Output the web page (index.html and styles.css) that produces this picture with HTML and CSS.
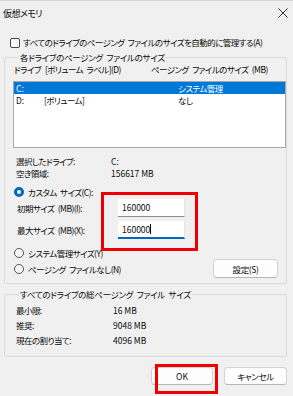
FILE: index.html
```html
<!DOCTYPE html>
<html>

<head>
  <title>仮想メモリ</title>
  <link rel="stylesheet" href="styles.css">
</head>

<body>
  <div class="titlebar">
    <span class="title">仮想メモリ</span>
    <svg class="close" width="10" height="10" viewBox="0 0 10 10">
      <path d="M0.5 0.5 L9.5 9.5 M9.5 0.5 L0.5 9.5" stroke="#333" stroke-width="1" fill="none" />
    </svg>
  </div>

  <div class="auto">
    <span class="checkbox"></span>
    <span>すべてのドライブのページング ファイルのサイズを自動的に管理する(A)</span>
  </div>

  <fieldset class="group">
    <legend>各ドライブのページング ファイルのサイズ</legend>
    <div class="list-head">
      <span>ドライブ</span>
      <span>[ボリューム ラベル](D)</span>
      <span>ページング ファイルのサイズ (MB)</span>
    </div>
    <div class="drive-list">
      <div class="drive-row selected">
        <span class="num">C:</span>
        <span></span>
        <span>システム管理</span>
      </div>
      <div class="drive-row">
        <span class="num">D:</span>
        <span>[ボリューム]</span>
        <span>なし</span>
      </div>
    </div>

    <div class="info">
      <span>選択したドライブ:</span>
      <span class="num">C:</span>
      <span>空き領域:</span>
      <span class="num">156617 MB</span>
    </div>

    <div class="radio-row custom">
      <span class="radio checked"></span>
      <span>カスタム サイズ(C):</span>
    </div>
    <div class="size-row first">
      <label>初期サイズ (MB)(I):</label>
      <div class="field num">160000</div>
    </div>
    <div class="size-row">
      <label>最大サイズ (MB)(X):</label>
      <div class="field focused num">160000<span class="caret"></span></div>
    </div>

    <div class="options">
      <div class="radios">
        <div class="radio-row">
          <span class="radio"></span>
          <span>システム管理サイズ(Y)</span>
        </div>
        <div class="radio-row">
          <span class="radio"></span>
          <span>ページング ファイルなし(N)</span>
        </div>
      </div>
      <button class="btn set">設定(S)</button>
    </div>
  </fieldset>

  <fieldset class="group total">
    <legend>すべてのドライブの総ページング ファイル サイズ</legend>
    <div class="totals">
      <span>最小限:</span>
      <span class="num">16 MB</span>
      <span>推奨:</span>
      <span class="num">9048 MB</span>
      <span>現在の割り当て:</span>
      <span class="num">4096 MB</span>
    </div>
  </fieldset>

  <div class="actions">
    <button class="btn num">OK</button>
    <button class="btn">キャンセル</button>
  </div>

  <div class="mark mark-size"></div>
  <div class="mark mark-ok"></div>
</body>

</html>
```

FILE: styles.css
```css
* {
  box-sizing: border-box;
}

body {
  margin: 0;
  width: 293px;
  height: 396px;
  overflow: hidden;
  position: relative;
  background-color: #f0f0f0;
  color: #0a0a0a;
  font-family: "Noto Sans CJK JP", sans-serif;
  font-size: 8.5px;
  line-height: 11px;
  letter-spacing: -0.55px;
  word-spacing: 2px;
  white-space: nowrap;
  font-feature-settings: "palt";
}

.num {
  letter-spacing: 0;
  word-spacing: 0;
}

.titlebar {
  height: 25px;
  display: flex;
  justify-content: space-between;
  align-items: center;
  padding: 0 5px 0 3px;
  border-top: 1px solid #d6d6d6;
}

.title {
  font-size: 9px;
}

.auto {
  display: flex;
  align-items: center;
  gap: 3px;
  height: 11px;
  margin-top: 12px;
  padding-left: 10px;
}

.checkbox {
  width: 10px;
  height: 10px;
  border: 1px solid #444;
  border-radius: 2px;
  background-color: #fbfbfb;
}

.group {
  margin: 4px 6px 0 4px;
  padding: 0 0 0 8px;
  border: 1px solid #dadada;
  border-radius: 2px;
  min-width: 0;
}

.group legend {
  padding: 0 1px;
  margin-left: 6px;
  line-height: 11px;
  letter-spacing: -0.3px;
}

.list-head {
  display: grid;
  grid-template-columns: 31px 106px 1fr;
  height: 13px;
  line-height: 13px;
  padding-left: 1px;
}

.drive-list {
  margin-top: 5px;
  height: 67px;
  background-color: #ffffff;
  border: 1px solid #a9a9a9;
  padding: 0;
}

.drive-row {
  display: grid;
  grid-template-columns: 28px 134px 1fr;
  height: 13px;
  line-height: 13px;
  padding-left: 2px;
}

.drive-row.selected {
  background-color: #0078d7;
  color: #ffffff;
  height: 12px;
  line-height: 12px;
}

.info {
  display: grid;
  grid-template-columns: 95px 1fr;
  grid-auto-rows: 12px;
  line-height: 12px;
  margin-top: 7px;
  padding-left: 3px;
}

.radio-row {
  display: flex;
  align-items: center;
  gap: 4px;
  height: 12px;
  padding-left: 1px;
}

.radio-row.custom {
  margin-top: 7px;
}

.radio {
  width: 10px;
  height: 10px;
  border: 1px solid #555;
  border-radius: 50%;
  background-color: #fafafa;
}

.radio.checked {
  border: 3px solid #0067c0;
  background-color: #ffffff;
}

.size-row {
  display: flex;
  align-items: center;
  height: 18px;
  margin-top: 4px;
  padding-left: 4px;
}

.size-row.first {
  margin-top: 1px;
}

.size-row label {
  width: 101px;
}

.field {
  width: 67px;
  height: 18px;
  line-height: 17px;
  padding-left: 4px;
  background-color: #ffffff;
  border-right: 1px solid #e4e4e4;
  border-bottom: 1px solid #8c8c8c;
}

.field.focused {
  border-bottom: 2px solid #0067c0;
}

.caret {
  display: inline-block;
  width: 1px;
  height: 10px;
  background-color: #000;
  vertical-align: -1px;
}

.options {
  display: flex;
  justify-content: space-between;
  align-items: flex-start;
  margin-top: 8px;
  padding-right: 8px;
  padding-bottom: 5px;
}

.radios {
  display: flex;
  flex-direction: column;
  gap: 4px;
}

.btn {
  font-family: inherit;
  font-size: 8.5px;
  font-feature-settings: "palt";
  letter-spacing: -0.4px;
  color: #0a0a0a;
  background-color: #fdfdfd;
  border: 1px solid #d3d3d3;
  border-bottom-color: #b5b5b5;
  border-radius: 4px;
  padding: 0;
  height: 18px;
}

.btn.num {
  letter-spacing: 0;
}

.btn.set {
  width: 65px;
  height: 19px;
  margin-top: 12px;
}

.group.total {
  margin-top: 5px;
  padding-bottom: 8px;
}

.totals {
  display: grid;
  grid-template-columns: 97px 1fr;
  grid-auto-rows: 15px;
  line-height: 15px;
  padding-top: 3px;
  padding-left: 3px;
}

.actions {
  display: flex;
  justify-content: flex-end;
  gap: 11px;
  margin-top: 10px;
  padding-right: 6px;
}

.actions .btn {
  width: 62px;
}

.actions .btn:last-child {
  width: 63px;
}

.mark {
  position: absolute;
  border: 3px solid #f00000;
}

.mark-size {
  left: 101px;
  top: 192px;
  width: 97px;
  height: 59px;
}

.mark-ok {
  left: 155px;
  top: 364px;
  width: 63px;
  height: 30px;
}
```
